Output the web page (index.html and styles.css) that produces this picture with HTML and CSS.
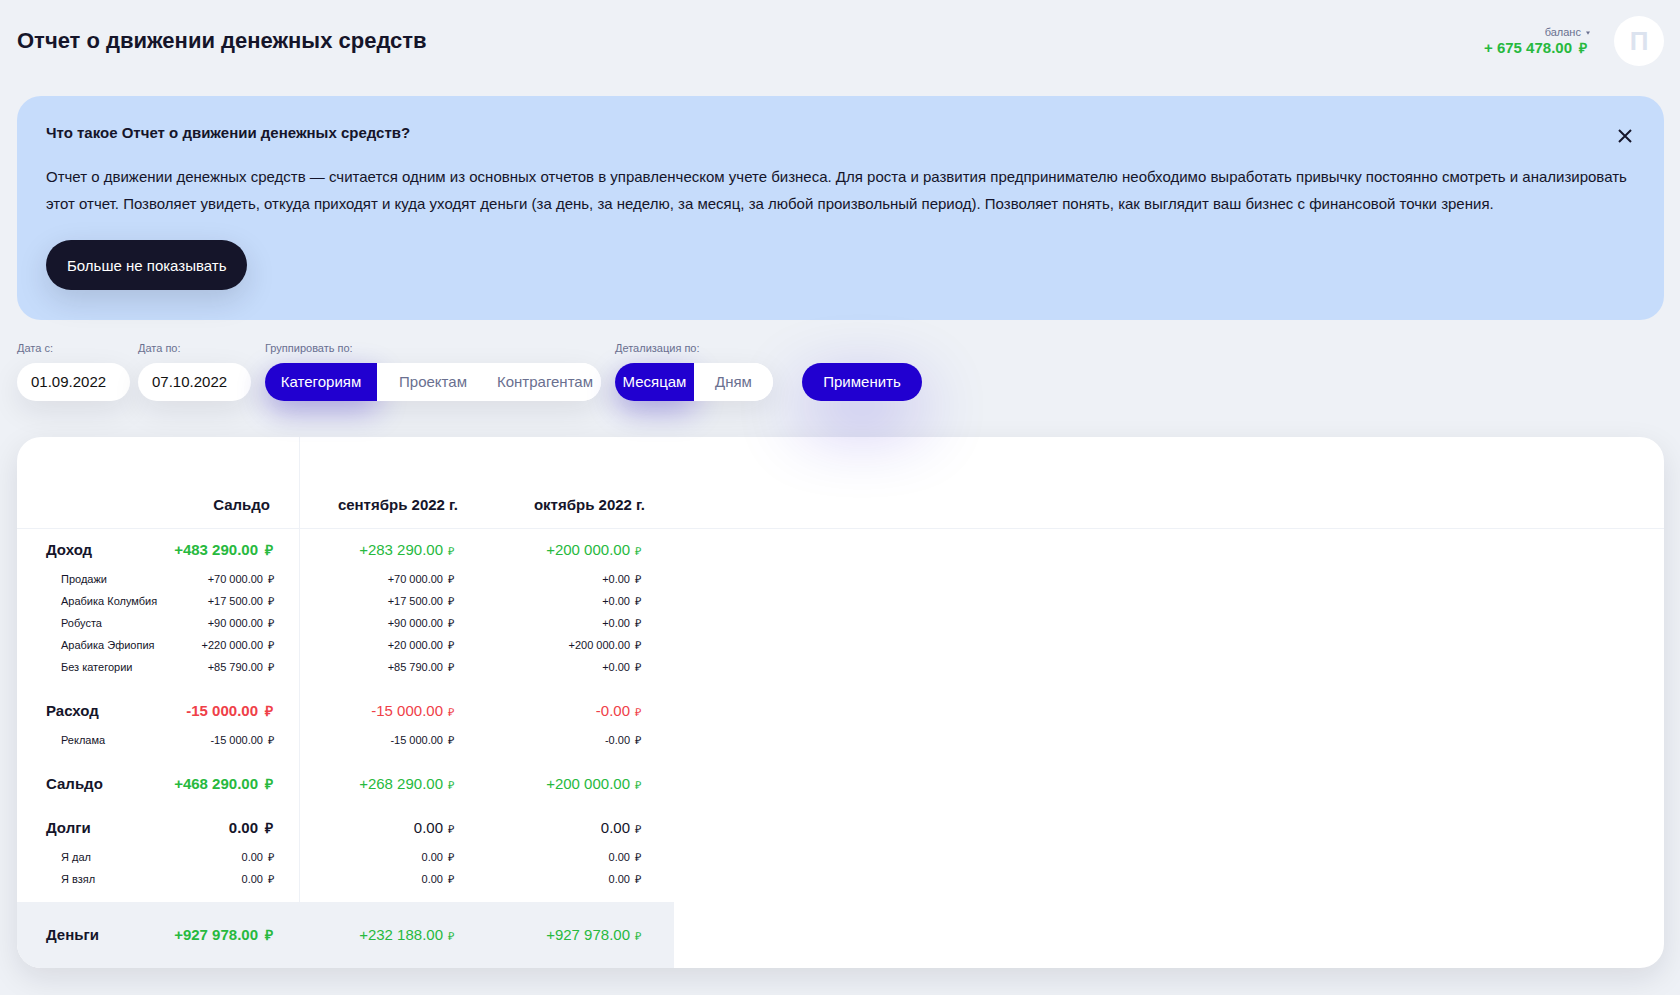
FILE: index.html
```html
<!DOCTYPE html>
<html lang="ru">
<head>
<meta charset="utf-8">
<title>Отчет о движении денежных средств</title>
<link rel="stylesheet" href="styles.css">
</head>
<body>
<header class="top">
  <h1 class="title">Отчет о движении денежных средств</h1>
  <div class="account">
    <div class="balance">
      <button class="balance-toggle" type="button">баланс <svg class="caret" viewBox="0 0 4 4" aria-hidden="true"><path d="M0 0.5h4L2 3.8z"/></svg></button>
      <div class="balance-sum">+ 675 478.00<span class="cur">₽</span></div>
    </div>
    <a class="avatar" href="#">П</a>
  </div>
</header>

<main>
<section class="notice">
  <button class="close" type="button" aria-label="Закрыть"><svg viewBox="0 0 14 14"><path d="M1 1l12 12M13 1L1 13"/></svg></button>
  <h2 class="notice-title">Что такое Отчет о движении денежных средств?</h2>
  <p class="notice-text">Отчет о движении денежных средств — считается одним из основных отчетов в управленческом учете бизнеса. Для роста и развития предпринимателю необходимо выработать привычку постоянно смотреть и анализировать этот отчет. Позволяет увидеть, откуда приходят и куда уходят деньги (за день, за неделю, за месяц, за любой произвольный период). Позволяет понять, как выглядит ваш бизнес с финансовой точки зрения.</p>
  <button class="dark-button" type="button">Больше не показывать</button>
</section>

<form class="filters">
  <div class="dates">
    <div class="field"><label class="caption" for="from">Дата с:</label><input class="date" id="from" type="text" value="01.09.2022"></div>
    <div class="field"><label class="caption" for="to">Дата по:</label><input class="date" id="to" type="text" value="07.10.2022"></div>
  </div>
  <fieldset class="field">
    <legend class="caption">Группировать по:</legend>
    <div class="segments segments-wide">
      <label class="segment"><input type="radio" name="group" checked><span>Категориям</span></label>
      <label class="segment"><input type="radio" name="group"><span>Проектам</span></label>
      <label class="segment"><input type="radio" name="group"><span>Контрагентам</span></label>
    </div>
  </fieldset>
  <fieldset class="field">
    <legend class="caption">Детализация по:</legend>
    <div class="segments">
      <label class="segment"><input type="radio" name="detail" checked><span>Месяцам</span></label>
      <label class="segment"><input type="radio" name="detail"><span>Дням</span></label>
    </div>
  </fieldset>
  <button class="apply" type="button">Применить</button>
</form>

<section class="card">
<table class="report">
  <colgroup><col class="col-name"><col class="col-total"><col class="col-month"><col class="col-month"><col></colgroup>
  <thead>
    <tr><th></th><th class="total">Сальдо</th><th>сентябрь 2022 г.</th><th>октябрь 2022 г.</th><th></th></tr>
  </thead>
  <tbody>
    <tr class="group first plus"><th>Доход</th><td class="total">+483 290.00<span class="cur">₽</span></td><td>+283 290.00<span class="cur">₽</span></td><td>+200 000.00<span class="cur">₽</span></td><td></td></tr>
    <tr><th>Продажи</th><td class="total">+70 000.00<span class="cur">₽</span></td><td>+70 000.00<span class="cur">₽</span></td><td>+0.00<span class="cur">₽</span></td><td></td></tr>
    <tr><th>Арабика Колумбия</th><td class="total">+17 500.00<span class="cur">₽</span></td><td>+17 500.00<span class="cur">₽</span></td><td>+0.00<span class="cur">₽</span></td><td></td></tr>
    <tr><th>Робуста</th><td class="total">+90 000.00<span class="cur">₽</span></td><td>+90 000.00<span class="cur">₽</span></td><td>+0.00<span class="cur">₽</span></td><td></td></tr>
    <tr><th>Арабика Эфиопия</th><td class="total">+220 000.00<span class="cur">₽</span></td><td>+20 000.00<span class="cur">₽</span></td><td>+200 000.00<span class="cur">₽</span></td><td></td></tr>
    <tr><th>Без категории</th><td class="total">+85 790.00<span class="cur">₽</span></td><td>+85 790.00<span class="cur">₽</span></td><td>+0.00<span class="cur">₽</span></td><td></td></tr>
    <tr class="group minus"><th>Расход</th><td class="total">-15 000.00<span class="cur">₽</span></td><td>-15 000.00<span class="cur">₽</span></td><td>-0.00<span class="cur">₽</span></td><td></td></tr>
    <tr><th>Реклама</th><td class="total">-15 000.00<span class="cur">₽</span></td><td>-15 000.00<span class="cur">₽</span></td><td>-0.00<span class="cur">₽</span></td><td></td></tr>
    <tr class="group single plus"><th>Сальдо</th><td class="total">+468 290.00<span class="cur">₽</span></td><td>+268 290.00<span class="cur">₽</span></td><td>+200 000.00<span class="cur">₽</span></td><td></td></tr>
    <tr class="group"><th>Долги</th><td class="total">0.00<span class="cur">₽</span></td><td>0.00<span class="cur">₽</span></td><td>0.00<span class="cur">₽</span></td><td></td></tr>
    <tr><th>Я дал</th><td class="total">0.00<span class="cur">₽</span></td><td>0.00<span class="cur">₽</span></td><td>0.00<span class="cur">₽</span></td><td></td></tr>
    <tr class="last"><th>Я взял</th><td class="total">0.00<span class="cur">₽</span></td><td>0.00<span class="cur">₽</span></td><td>0.00<span class="cur">₽</span></td><td></td></tr>
  </tbody>
  <tfoot>
    <tr class="group plus"><th>Деньги</th><td class="total">+927 978.00<span class="cur">₽</span></td><td>+232 188.00<span class="cur">₽</span></td><td>+927 978.00<span class="cur">₽</span></td><td></td></tr>
  </tfoot>
</table>
</section>
</main>
</body>
</html>
```
FILE: styles.css
```css
* { box-sizing: border-box; }
body {
  margin: 0;
  padding: 16px 16px 27px 17px;
  background: #eef1f6;
  color: #15152a;
  font-family: "Liberation Sans", Arial, sans-serif;
  font-size: 15px;
}
button, input { font: inherit; color: inherit; }
button { border: 0; cursor: pointer; }
h1, h2, p { margin: 0; }

.top { display: flex; justify-content: space-between; align-items: center; height: 50px; margin-bottom: 30px; }
.title { font-size: 22px; line-height: 30px; }
.account { display: flex; align-items: center; gap: 24px; }
.balance { text-align: right; }
.balance-toggle { display: block; margin-left: auto; padding: 0; background: none; color: #6a7090; font-size: 11px; line-height: 14px; }
.caret { width: 4px; height: 4px; margin-left: 2px; vertical-align: 1px; fill: #6a7090; }
.balance-sum { padding-right: 3px; color: #27b93e; font-weight: bold; line-height: 18px; }
.avatar { display: grid; place-items: center; width: 50px; height: 50px; border-radius: 50%; background: #fff; color: #dce3ef; font-size: 26px; font-weight: bold; text-decoration: none; }

.notice { position: relative; padding: 27px 29px 30px; border-radius: 24px; background: #c6dcfb; }
.notice-title { margin-bottom: 20px; font-size: 15px; line-height: 20px; }
.notice-text { margin-bottom: 23px; line-height: 27px; }
.close { position: absolute; top: 30px; right: 29px; display: grid; place-items: center; width: 20px; height: 20px; padding: 0; background: none; }
.close svg { width: 14px; height: 14px; fill: none; stroke: #15152a; stroke-width: 2; }
.dark-button { height: 50px; padding: 0 21px; border-radius: 25px; background: #15152a; color: #fff; box-shadow: 0 10px 30px rgba(21, 21, 42, 0.15); }

.filters { position: relative; z-index: 1; display: flex; align-items: flex-end; gap: 14px; margin: 20px 0 36px; }
.dates { display: flex; gap: 8px; }
.field { margin: 0; padding: 0; border: 0; min-width: 0; }
.caption { display: block; padding: 0; margin-bottom: 7px; color: #6a7090; font-size: 11px; line-height: 16px; }
.date { display: block; width: 113px; height: 38px; padding: 0 14px 2px; border: 0; border-radius: 19px; background: #fff; color: #111; box-shadow: 0 10px 30px rgba(21, 21, 42, 0.09); }
.segments { display: grid; grid-auto-flow: column; grid-auto-columns: 79px; height: 38px; border-radius: 19px; background: #fff; box-shadow: 0 10px 30px rgba(21, 21, 42, 0.09); }
.segments-wide { grid-auto-columns: 112px; }
.segment { position: relative; cursor: pointer; }
.segment input { position: absolute; opacity: 0; margin: 0; }
.segment span { display: grid; place-items: center; height: 38px; padding-bottom: 2px; background: #fff; color: #6a7090; }
.segment:last-child span { border-radius: 0 19px 19px 0; }
.segment input:checked + span { border-radius: 19px 0 0 19px; background: #2100d0; color: #fff; box-shadow: 0 10px 30px rgba(33, 0, 208, 0.28); }
.apply { width: 120px; height: 38px; margin-left: 15px; padding: 0 0 2px; border-radius: 19px; background: #2100d0; color: #fff; box-shadow: 0 24px 70px rgba(33, 0, 208, 0.3); }

.card { border-radius: 24px; background: #fff; box-shadow: 0 10px 30px rgba(21, 21, 42, 0.1); }
.report { width: 100%; table-layout: fixed; border-collapse: separate; border-spacing: 0; }
.col-name { width: 153px; }
.col-total { width: 130px; }
.col-month { width: 187px; }
.report th, .report td { padding: 0 33px 0 0; text-align: right; white-space: nowrap; font-size: 11px; font-weight: normal; line-height: 22px; }
.report .total { padding-right: 25px; border-right: 1px solid #eef1f6; }
.report thead th { height: 92px; padding: 0 29px 12px 0; border-bottom: 1px solid #eef1f6; font-size: 15px; font-weight: bold; vertical-align: bottom; }
.report thead .total { padding-right: 29px; }
.report tbody th, .report tfoot th { padding-left: 44px; padding-right: 0; text-align: left; }
.report .group th, .report .group td { padding-top: 22px; padding-bottom: 7px; font-size: 15px; }
.report .group th { padding-left: 29px; font-weight: bold; }
.report .group .total { padding-right: 26px; font-weight: bold; }
.report .first th, .report .first td { padding-top: 10px; }
.report .single th, .report .single td { padding-bottom: 0; }
.report .last th, .report .last td { padding-bottom: 12px; }
.report tfoot .group th, .report tfoot .group td { padding-top: 22px; padding-bottom: 22px; }
.report tfoot th, .report tfoot td { background: #eef1f6; }
.report tfoot th { border-radius: 0 0 0 24px; }
.report tfoot td:last-child { background: none; }
.plus td { color: #27b93e; }
.minus td { color: #ef4048; }
.cur { margin-left: 5px; font-size: 11px; line-height: 1; }
.group .total .cur, .balance-sum .cur { margin-left: 7px; font-size: 14px; }
```
